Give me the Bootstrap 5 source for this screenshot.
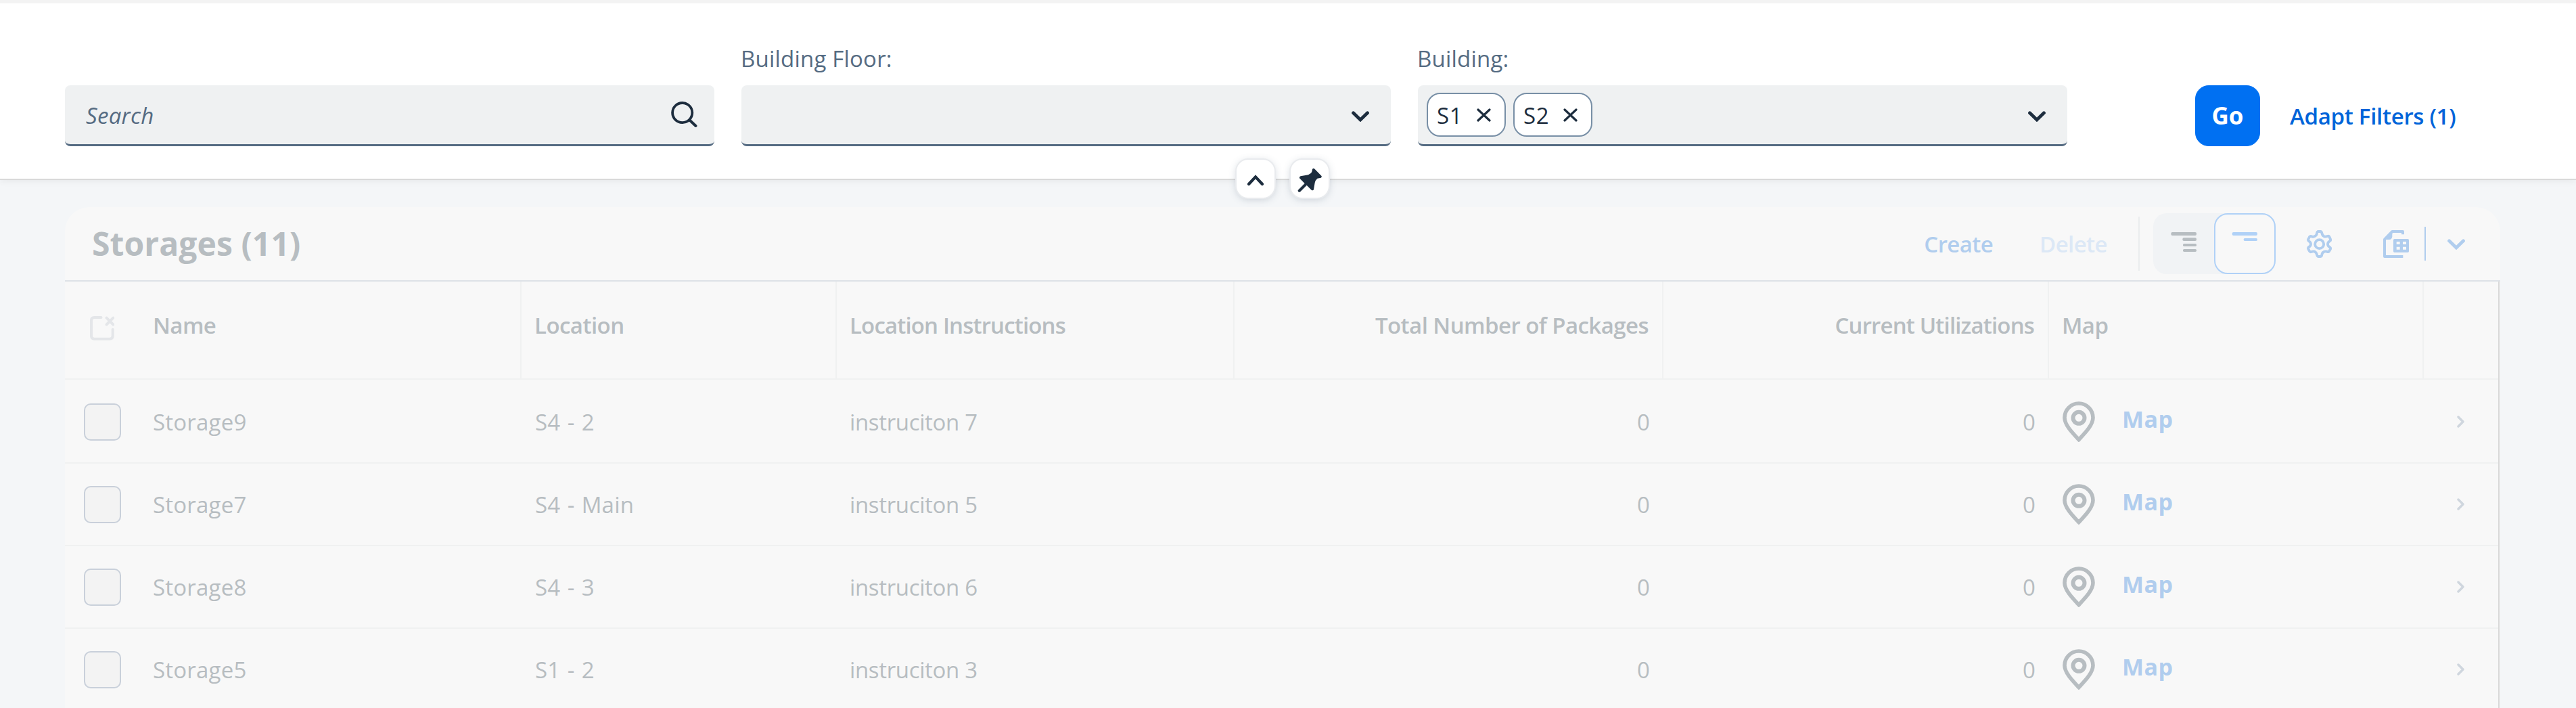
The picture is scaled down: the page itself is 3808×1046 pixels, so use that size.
<!doctype html>
<html lang="en">
<head>
<meta charset="utf-8">
<title>Storages</title>
<link href="https://cdn.jsdelivr.net/npm/bootstrap@5.3.0/dist/css/bootstrap.min.css" rel="stylesheet">
<style>
body{background:#f4f6f8;font-family:"Open Sans","Noto Sans",sans-serif;font-size:33px;line-height:45px;color:#1d2d3e;height:1046px;overflow:hidden;letter-spacing:.2px}
svg{display:block;flex:none}
.filter-panel{height:266px;background:#fff;border-top:5px solid #f3f3f3;border-bottom:2px solid #d9d9d9;box-shadow:0 2px 10px rgba(0,0,0,.06);padding:58px 96px 0}
.filter-item{width:960px}
.filter-label{height:63px;padding-top:1px;color:#556b82;margin-left:-1px;letter-spacing:.2px}
.filter-field{height:90px;background:#eff1f2;border-bottom:3px solid #556b82;border-radius:8px}
.filter-field .hint{color:#556b82;font-style:italic;padding:1px 0 0 31px;letter-spacing:.3px}
.chip{width:117px;height:65px;margin-top:-1px;background:#fff;border:2px solid #788fa6;border-radius:20px;letter-spacing:.6px}
.go-btn{--bs-btn-bg:#0070f2;--bs-btn-border-color:#0070f2;width:96px;height:90px;border-radius:20px;font-weight:700;font-size:35px;padding:0;letter-spacing:0}
.adapt{color:#0064d9;font-weight:600;letter-spacing:-.3px}
.fab-row{left:1828px;top:236px;gap:24px}
.fab{width:56px;height:56px;border-radius:17px;background:#fff;box-shadow:0 0 0 2px #e9ebee,0 2px 12px rgba(85,107,130,.3)}
.storage-card{width:3600px;margin:40px 0 0 96px;background:#f8f8f8;border-radius:36px 36px 0 0;color:#b7bdc1}
.bar{height:110px;border-bottom:2px solid #dde2e7;padding-left:40px}
.bar h2{font-size:48px;font-weight:700;margin:0;letter-spacing:.1px}
.dim-link{color:#b0cdee;font-weight:600;letter-spacing:-.6px}
.seg{width:181px;height:90px;border-radius:20px;background:#f1f3f5}
.seg-on{width:91px;height:90px;border:2px solid #b0d1f7;border-radius:20px;background:#f8f8f8}
.grid-body{border-right:2px solid #d9d9d9;margin-right:1px}
.line{display:grid;grid-template-columns:130px 545px 466px 588px 634px 570px 554px 1fr;border-bottom:2px solid #f0f1f1;height:122px}
.line>div{display:flex;align-items:center;padding:0 20px}
.line>.sel{padding-left:28px}
.line>.nm{padding-left:0}
.line>.loc{word-spacing:1.5px}
.line>.ins{letter-spacing:-.35px;padding-left:19px}
.line>.num{justify-content:flex-end}
.first-line{height:124px;padding-top:2px}
.head-line{height:145px;font-weight:600;letter-spacing:-.55px}
.head-line>div{border-right:2px solid #f0f1f1;padding:0 20px 15px 19px}
.head-line>.sel{border:0;padding:0 0 6px 37px}
.head-line>.nm{padding-left:0}
.head-line>.tight{letter-spacing:-.85px}
.head-line>div:last-child{border:0}
.tick{width:55px;height:55px;border:2px solid #c9d0da;border-radius:10px;background:#f3f3f3}
.map-link{color:#b0cdee;font-weight:700;font-size:34px;letter-spacing:.4px;margin:-7px 0 0 40px}
</style>
</head>
<body>
<svg width="0" height="0" class="position-absolute">
<symbol id="chev" viewBox="0 0 26 16"><path d="M2.5 2.8 13 13 23.5 2.8" fill="none" stroke="currentColor" stroke-width="4.800" stroke-linecap="round"/></symbol>
<symbol id="x" viewBox="0 0 21 20"><path d="M2 2 19 18M19 2 2 18" fill="none" stroke="currentColor" stroke-width="3.2" stroke-linecap="round"/></symbol>
<symbol id="pin" viewBox="0 0 48 60"><path d="M24 56.5C15 47 3 35 3 24a21 21 0 0 1 42 0c0 11-12 23-21 32.500Z" fill="none" stroke="currentColor" stroke-width="5.600"/><circle cx="24" cy="24.300" r="8.500" fill="none" stroke="currentColor" stroke-width="6"/></symbol>
<symbol id="nav" viewBox="0 0 11 18"><path d="M2 2 9 9 2 16" fill="none" stroke="#cfd6de" stroke-width="3.400" stroke-linecap="round" stroke-linejoin="round"/></symbol>
</svg>

<header class="filter-panel d-flex align-items-start">
  <div class="d-flex" style="gap:40px">
    <div class="filter-item"><div class="filter-label"></div>
      <div class="filter-field d-flex align-items-center justify-content-between"><span class="hint">Search</span>
        <svg width="39" height="39" viewBox="0 0 39 39" style="margin-right:25px"><circle cx="16.700" cy="16.600" r="14.600" fill="none" stroke="#1d2d3e" stroke-width="3.800"/><path d="M27.500 27.500 36.500 36" stroke="#1d2d3e" stroke-width="4" stroke-linecap="round"/></svg></div></div>
    <div class="filter-item"><div class="filter-label">Building Floor:</div>
      <div class="filter-field d-flex align-items-center justify-content-end pt-1"><svg width="26" height="16" style="margin-right:32px"><use href="#chev"/></svg></div></div>
    <div class="filter-item"><div class="filter-label">Building:</div>
      <div class="filter-field d-flex align-items-center">
        <div class="d-flex" style="gap:11px;margin-left:13px">
          <div class="chip d-flex align-items-center">
            <span style="margin:2px 0 0 13px">S1</span><svg width="21" height="20" class="ms-auto" style="margin:2px 20px 0 0"><use href="#x"/></svg></div>
          <div class="chip d-flex align-items-center">
            <span style="margin:2px 0 0 13px">S2</span><svg width="21" height="20" class="ms-auto" style="margin:2px 20px 0 0"><use href="#x"/></svg></div>
        </div>
        <svg width="26" height="16" class="ms-auto mt-1" style="margin-right:32px"><use href="#chev"/></svg>
      </div></div>
  </div>
  <div class="d-flex align-items-center" style="margin:63px 0 0 189px;gap:44px">
    <button class="btn btn-primary go-btn">Go</button><span class="adapt">Adapt Filters (1)</span>
  </div>
</header>

<div class="fab-row position-absolute d-flex">
  <div class="fab"><svg width="56" height="56" viewBox="144 78 168 168"><path d="M198 186 228 154 258 186" fill="none" stroke="#1d2d3e" stroke-width="13" stroke-linecap="round"/></svg></div>
  <div class="fab"><svg width="56" height="56" viewBox="384 78 168 168"><path d="M480 120Q484 114 489 118L520 149Q524 155 518 158L502 161Q493 169 491 180L486 210Q483 217 476 212L455 191 425 221Q415 223 416 213L446 183 423 160Q421 153 428 151L462 145Q478 139 479 126Z" fill="#1d2d3e"/></svg></div>
</div>

<main class="storage-card">
  <div class="bar d-flex align-items-center">
    <h2>Storages (11)</h2>
    <div class="d-flex align-items-center ms-auto">
      <span class="dim-link">Create</span>
      <span class="dim-link" style="color:#dce8f6;margin-left:69px">Delete</span>
      <span style="width:2px;height:80px;background:#ebedee;margin-left:46px"></span>
      <div class="seg d-flex align-items-center" style="margin-left:20px">
        <svg width="90" height="90" viewBox="39 45 270 270"><g fill="#b7bdc1"><rect x="118" y="129" width="113" height="15" rx="6"/><rect x="169" y="154" width="62" height="14" rx="6"/><rect x="171" y="180" width="60" height="12" rx="5"/><rect x="171" y="204" width="60" height="12" rx="5"/></g></svg>
        <div class="seg-on"><svg width="87" height="86" viewBox="316 51 261 258"><g fill="#b0d1f7"><rect x="390" y="129" width="112" height="15" rx="6"/><rect x="441" y="156" width="61" height="12" rx="5"/></g></svg></div>
      </div>
      <svg width="37" height="41" viewBox="720 120 111 123" style="margin-left:46px"><g fill="none" stroke="#b0cdee" stroke-width="11.500"><path d="M769 126H783Q786 127 787 133 789 144 797 148 803 150 811 147 818 145 820 149L825 160Q827 166 821 169 813 174 813 182 813 190 821 195 827 198 825 204L819 214Q816 218 809 215 802 213 796 216 788 220 787 229 786 237 781 237H770Q766 236 765 229 763 219 755 215 749 213 741 216 735 218 732 213L727 204Q724 198 730 194 738 190 738 182 738 174 730 169 724 165 727 160L732 150Q736 145 742 148 750 151 756 147 764 143 765 133 766 127 769 126Z"/><circle cx="776" cy="182" r="19.500"/></g></svg>
      <svg width="38" height="41" viewBox="1059 120 114 123" style="margin-left:76px"><path d="M1146 139V126H1099L1065 161V237H1147" fill="none" stroke="#b0cdee" stroke-width="12" stroke-linejoin="round"/><path d="M1066 162 1099 127V148Q1098 162 1086 162Z" fill="#b0cdee"/><path fill="#b0cdee" fill-rule="evenodd" d="M1109 159H1168Q1173 159 1173 164V214Q1173 219 1168 219H1109Q1104 219 1104 214V164Q1104 159 1109 159ZM1118 171V183H1133V171ZM1146 171V183H1161V171ZM1118 194V206H1133V194ZM1146 194V206H1161V194Z"/></svg>
      <span style="width:2px;height:50px;background:#b0cdee;margin-left:23px"></span>
      <svg width="26" height="16" class="dim-link" style="margin:2px 52px 0 32px"><use href="#chev"/></svg>
    </div>
  </div>

  <div class="grid-body">
    <div class="line head-line">
      <div class="sel"><svg width="36" height="36" viewBox="129 81 107 107" fill="none" stroke="#e4e6e9" stroke-width="12" stroke-linecap="round"><path d="M178 87H148Q135 87 135 100V168Q135 181 148 181H216Q229 181 229 168V140M202 89 231 118M231 89 202 118"/></svg></div>
      <div class="nm">Name</div><div>Location</div><div class="tight">Location Instructions</div><div class="num">Total Number of Packages</div><div class="num tight">Current Utilizations</div><div>Map</div><div></div>
    </div>
    <div class="line first-line">
      <div class="sel"><span class="tick"></span></div><div class="nm">Storage9</div><div class="loc">S4 - 2</div><div class="ins">instruciton 7</div><div class="num">0</div><div class="num">0</div>
      <div><svg width="48" height="60"><use href="#pin"/></svg><span class="map-link">Map</span></div><div class="justify-content-end"><svg width="11" height="18" style="margin-right:30px"><use href="#nav"/></svg></div>
    </div>
    <div class="line">
      <div class="sel"><span class="tick"></span></div><div class="nm">Storage7</div><div class="loc">S4 - Main</div><div class="ins">instruciton 5</div><div class="num">0</div><div class="num">0</div>
      <div><svg width="48" height="60"><use href="#pin"/></svg><span class="map-link">Map</span></div><div class="justify-content-end"><svg width="11" height="18" style="margin-right:30px"><use href="#nav"/></svg></div>
    </div>
    <div class="line">
      <div class="sel"><span class="tick"></span></div><div class="nm">Storage8</div><div class="loc">S4 - 3</div><div class="ins">instruciton 6</div><div class="num">0</div><div class="num">0</div>
      <div><svg width="48" height="60"><use href="#pin"/></svg><span class="map-link">Map</span></div><div class="justify-content-end"><svg width="11" height="18" style="margin-right:30px"><use href="#nav"/></svg></div>
    </div>
    <div class="line">
      <div class="sel"><span class="tick"></span></div><div class="nm">Storage5</div><div class="loc">S1 - 2</div><div class="ins">instruciton 3</div><div class="num">0</div><div class="num">0</div>
      <div><svg width="48" height="60"><use href="#pin"/></svg><span class="map-link">Map</span></div><div class="justify-content-end"><svg width="11" height="18" style="margin-right:30px"><use href="#nav"/></svg></div>
    </div>
  </div>
</main>
<script src="https://cdn.jsdelivr.net/npm/bootstrap@5.3.0/dist/js/bootstrap.bundle.min.js"></script>
</body>
</html>
